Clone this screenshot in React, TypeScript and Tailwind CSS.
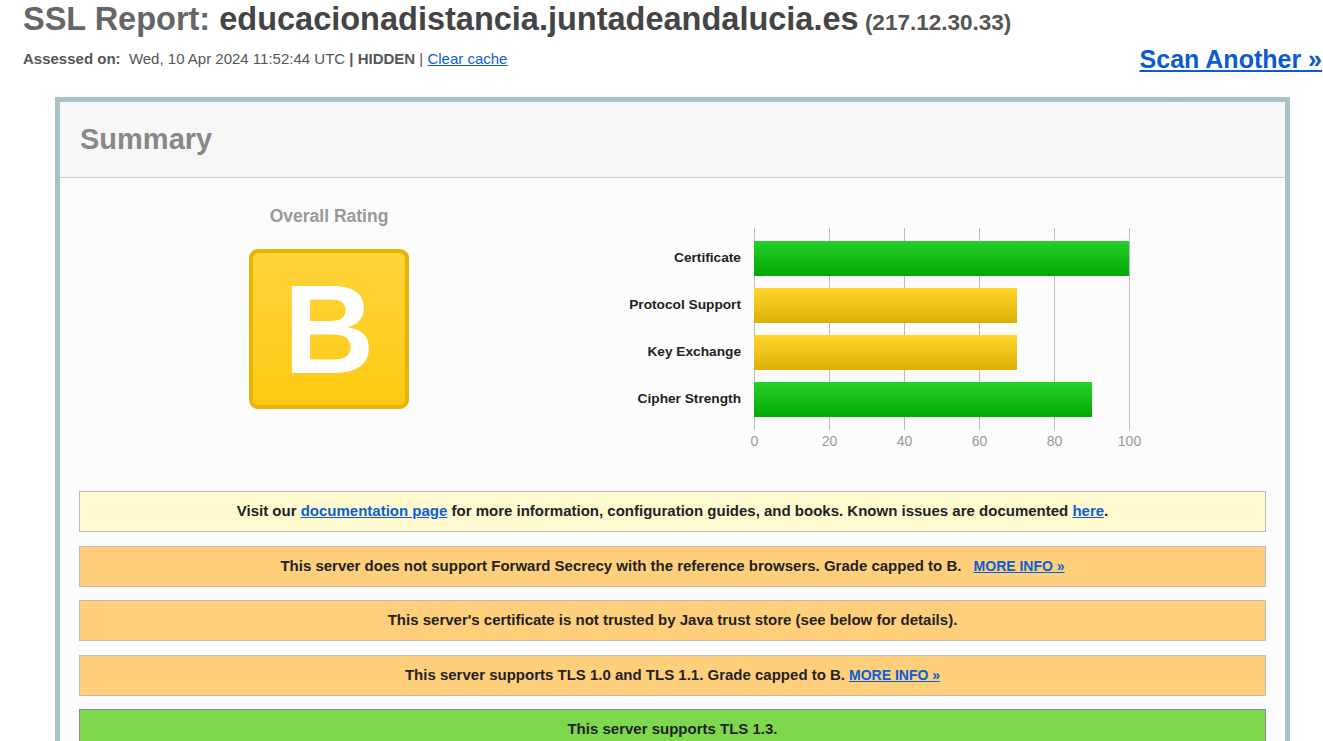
const bars = [
  { label: "Certificate", value: 100, color: "green" },
  { label: "Protocol Support", value: 70, color: "yellow" },
  { label: "Key Exchange", value: 70, color: "yellow" },
  { label: "Cipher Strength", value: 90, color: "green" },
];

const ticks = [0, 20, 40, 60, 80, 100];

function Notice({ tone, children }: { tone: "info" | "warn" | "good"; children: React.ReactNode }) {
  const toneClass =
    tone === "info"
      ? "bg-[#fff9d0] border-[#bbbbbb]"
      : tone === "warn"
      ? "bg-[#ffcf7c] border-[#bbbbbb]"
      : "bg-[#7ed84e] border-[#8a8a8a]";
  return (
    <div className={`h-[41px] border flex items-center justify-center text-[15px] font-bold text-[#222] ${toneClass}`}>
      <span>{children}</span>
    </div>
  );
}

function MoreInfo() {
  return (
    <a href="#" className="text-[14px] font-bold text-[#0a5fd6] underline ml-2">
      MORE INFO »
    </a>
  );
}

export default function App() {
  return (
    <div className="min-h-screen bg-white font-['Liberation_Sans',Arial,sans-serif] text-[#555]">
      <div className="pl-[23px] pr-[1px] w-[1323px]">
        {/* Title */}
        <h1 className="text-[32.5px] leading-[38px] font-bold">
          <span className="text-[#666]">SSL Report: </span>
          <span className="text-[#444]">educacionadistancia.juntadeandalucia.es</span>
          <span className="text-[22.5px] text-[#555]"> (217.12.30.33)</span>
        </h1>

        <div className="flex items-end justify-between mt-[2px]">
          <div className="text-[15px] pb-[4px]">
            <b>Assessed on:</b>&nbsp; Wed, 10 Apr 2024 11:52:44 UTC <b>| HIDDEN</b> |{" "}
            <a href="#" className="text-[#0a5fd6] underline">Clear cache</a>
          </div>
          <a href="#" className="text-[25px] font-bold text-[#0a5bd0] underline leading-[30px]">
            Scan Another »
          </a>
        </div>

        {/* Summary box */}
        <div className="mx-auto mt-[23px] w-[1235px] border-[5px] border-[#a6c3c6] bg-[#fcfcfc]">
          <div className="h-[76px] bg-[#f7f7f7] border-b border-[#bcd1d2] flex items-center pl-[20px]">
            <h2 className="text-[29px] font-bold text-[#888]">Summary</h2>
          </div>

          <div className="px-[19px]">
            <div className="flex">
              {/* Overall rating */}
              <div className="w-[500px] flex flex-col items-center pt-[28px]">
                <div className="text-[17.5px] font-bold text-[#999] leading-[20px]">Overall Rating</div>
                <div className="mt-[23px] w-[160px] h-[160px] rounded-[9px] border-[4px] border-[#e6b50c] bg-gradient-to-b from-[#ffd437] to-[#ffca0f] flex items-center justify-center">
                  <span className="text-white font-bold text-[126px] leading-none mt-[2px]">B</span>
                </div>
              </div>

              {/* Chart */}
              <div className="flex pt-[50px]">
                <div className="w-[162px] flex flex-col gap-[12px] pt-[13px]">
                  {bars.map((b) => (
                    <div key={b.label} className="h-[35px] flex items-center justify-end text-[13.7px] font-bold text-[#222]">
                      {b.label}
                    </div>
                  ))}
                </div>
                <div className="ml-[13px] w-[400px]">
                  <div className="relative w-[376px] h-[202px]">
                    <svg className="absolute inset-0" width="376" height="202">
                      {ticks.map((t) => (
                        <line key={t} x1={t * 3.75 + 0.5} x2={t * 3.75 + 0.5} y1={0} y2={202} stroke="#bbbbbb" strokeWidth="1" />
                      ))}
                    </svg>
                    <div className="relative flex flex-col gap-[12px] pt-[13px]">
                      {bars.map((b) => (
                        <div
                          key={b.label}
                          className={`h-[35px] ${
                            b.color === "green"
                              ? "bg-gradient-to-b from-[#24d12a] to-[#00a800]"
                              : "bg-gradient-to-b from-[#ffd62a] to-[#dcb000]"
                          }`}
                          style={{ width: b.value * 3.75 }}
                        />
                      ))}
                    </div>
                  </div>
                  <div className="relative h-[24px] w-[400px] text-[14px] text-[#999]">
                    {ticks.map((t) => (
                      <span key={t} className="absolute top-[1px] -translate-x-1/2" style={{ left: t * 3.75 + 0.5 }}>
                        {t}
                      </span>
                    ))}
                  </div>
                </div>
              </div>
            </div>

            {/* Notices */}
            <div className="mt-[37px] flex flex-col gap-[13.5px] pb-[20px]">
              <Notice tone="info">
                Visit our <a href="#" className="text-[#0a5fd6] underline">documentation page</a> for more information, configuration guides, and books. Known issues are documented{" "}
                <a href="#" className="text-[#0a5fd6] underline">here</a>.
              </Notice>
              <Notice tone="warn">
                This server does not support Forward Secrecy with the reference browsers. Grade capped to B. <MoreInfo />
              </Notice>
              <Notice tone="warn">This server's certificate is not trusted by Java trust store (see below for details).</Notice>
              <Notice tone="warn">
                This server supports TLS 1.0 and TLS 1.1. Grade capped to B.
                <a href="#" className="text-[14px] font-bold text-[#0a5fd6] underline ml-1">MORE INFO »</a>
              </Notice>
              <Notice tone="good">This server supports TLS 1.3.</Notice>
            </div>
          </div>
        </div>
      </div>
    </div>
  );
}
